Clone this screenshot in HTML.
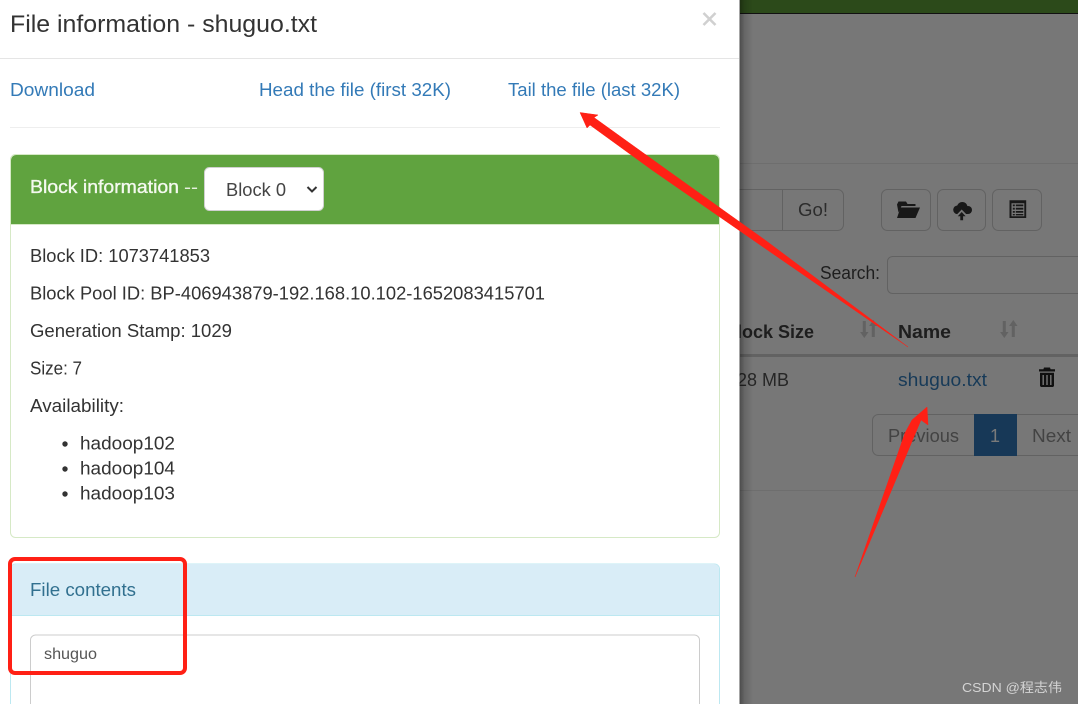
<!DOCTYPE html>
<html><head><meta charset="utf-8"><style>
html,body{margin:0;padding:0;background:#777}
svg{display:block;position:absolute;left:0;top:0}
text{font-family:"Liberation Sans","Noto Sans CJK SC",sans-serif}
</style></head><body>
<svg width="1078" height="704" viewBox="0 0 1078 704" xmlns="http://www.w3.org/2000/svg">
<defs><linearGradient id="sh" x1="0" x2="1" y1="0" y2="0"><stop offset="0" stop-color="#000" stop-opacity=".4"/><stop offset=".4" stop-color="#000" stop-opacity=".14"/><stop offset="1" stop-color="#000" stop-opacity="0"/></linearGradient></defs>
<rect width="1078" height="704" fill="#777"/>
<rect x="740" width="338" height="13" fill="#2c4a1a"/>
<rect x="740" y="13" width="338" height="1" fill="#111"/>
<rect x="740" y="163" width="338" height="1" fill="#6e6e6e"/>
<rect x="740" y="490" width="338" height="1" fill="#6e6e6e"/>
<!-- go group -->
<path d="M730 189.500H837.500a6 6 0 0 1 6 6V224.500a6 6 0 0 1-6 6H730" fill="none" stroke="#626262"/>
<path d="M782.500 190V230" stroke="#626262"/>
<text x="798" y="216" font-size="18.600" fill="#2c2c2c" textLength="30" lengthAdjust="spacingAndGlyphs">Go!</text>
<rect x="881.500" y="189.500" width="49" height="41" rx="6" fill="none" stroke="#626262"/>
<rect x="937.500" y="189.500" width="48" height="41" rx="6" fill="none" stroke="#626262"/>
<rect x="992.500" y="189.500" width="49" height="41" rx="6" fill="none" stroke="#626262"/>
<!-- folder -->
<path d="M897 204.500l1.500-3h7.500l1.500 2.500h8v2h-14l-3 6.500zM900.500 207.500h19.500l-4.500 10.500h-18.500z" fill="#181818"/>
<!-- cloud -->
<circle cx="957.500" cy="209.800" r="4.300" fill="#181818"/><circle cx="962.300" cy="207.300" r="5.300" fill="#181818"/><circle cx="968" cy="210" r="4" fill="#181818"/>
<rect x="957" y="209" width="11" height="5" fill="#181818"/>
<path d="M961.700 209.500l6.800 7h-4.300v5h-5v-5h-4.300z" fill="#777"/>
<path d="M961.700 212l3.900 4.300h-2.500v4h-2.800v-4h-2.500z" fill="#181818"/>
<!-- list -->
<path fill-rule="evenodd" d="M1009.500 200.300h16.700v17.700h-16.700zM1011.500 203.300v13h12.800v-13zM1012.800 204.500h2v1.800h-2zM1015.800 204.500h7.500v1.800h-7.500zM1012.800 207.800h2v1.800h-2zM1015.800 207.800h7.500v1.800h-7.500zM1012.800 211h2v1.800h-2zM1015.800 211h7.500v1.800h-7.500zM1012.800 214h2v1.400h-2zM1015.800 214h7.500v1.400h-7.500z" fill="#181818"/>
<text x="820" y="279" font-size="18.600" fill="#1e1e1e" textLength="60" lengthAdjust="spacingAndGlyphs">Search:</text>
<rect x="887.500" y="256.500" width="210" height="37" rx="5" fill="none" stroke="#626262"/>
<text x="724" y="338" font-size="18.600" font-weight="bold" fill="#1e1e1e" textLength="90" lengthAdjust="spacingAndGlyphs">Block Size</text>
<text x="898" y="338" font-size="18.600" font-weight="bold" fill="#1e1e1e" textLength="53" lengthAdjust="spacingAndGlyphs">Name</text>
<!-- sort icons -->
<g fill="#626262">
<path d="M862.800 321h3v11h2.700l-4.200 6-4.200-6h2.700zM874.800 337h-3v-11h-2.700l4.200-6 4.200 6h-2.700z"/>
<path d="M1002.800 321h3v11h2.700l-4.200 6-4.200-6h2.700zM1014.800 337h-3v-11h-2.700l4.200-6 4.200 6h-2.700z"/>
</g>
<rect x="740" y="354" width="338" height="3" fill="#626262"/>
<text x="727" y="386" font-size="18.600" fill="#262626" textLength="62" lengthAdjust="spacingAndGlyphs">128 MB</text>
<text x="898" y="386" font-size="18.600" fill="#173a58" textLength="89" lengthAdjust="spacingAndGlyphs">shuguo.txt</text>
<!-- trash -->
<path fill-rule="evenodd" d="M1044 367.500h6l.6 1.800h4.400v2.200h-16v-2.200h4.400zM1040 372.800h14v13.200l-1 1h-12l-1-1zM1042.500 375v10h1.400v-10zM1046.300 375v10h1.400v-10zM1050.100 375v10h1.400v-10z" fill="#101010"/>
<!-- pagination -->
<path d="M1078 414.500H878.500a6 6 0 0 0-6 6V449.500a6 6 0 0 0 6 6H1078" fill="none" stroke="#626262"/>
<rect x="974" y="414" width="43" height="42" fill="#173857"/>
<text x="888" y="442" font-size="18.600" fill="#434343" textLength="71" lengthAdjust="spacingAndGlyphs">Previous</text>
<text x="990" y="442" font-size="18.600" fill="#7a7a7a" textLength="10" lengthAdjust="spacingAndGlyphs">1</text>
<text x="1032" y="442" font-size="18.600" fill="#434343" textLength="39" lengthAdjust="spacingAndGlyphs">Next</text>
<text x="962" y="692" font-size="13" fill="#d4d4d4" textLength="100" lengthAdjust="spacingAndGlyphs">CSDN @程志伟</text>
<!-- shadow + modal -->
<rect x="739" width="14" height="704" fill="url(#sh)"/>
<rect width="739.500" height="704" fill="#fff"/>
<rect y="58" width="739" height="1" fill="#e5e5e5"/>
<text x="10" y="32" font-size="24" fill="#333" textLength="307" lengthAdjust="spacingAndGlyphs">File information - shuguo.txt</text>
<path d="M703.500 13l12 12M715.500 13l-12 12" stroke="#d0d0d0" stroke-width="2.600"/>
<g font-size="18.600" fill="#337ab7">
<text x="10" y="96" textLength="85" lengthAdjust="spacingAndGlyphs">Download</text>
<text x="259" y="96" textLength="192" lengthAdjust="spacingAndGlyphs">Head the file (first 32K)</text>
<text x="508" y="96" textLength="172" lengthAdjust="spacingAndGlyphs">Tail the file (last 32K)</text>
</g>
<rect x="10" y="127" width="710" height="1" fill="#eee"/>
<!-- green panel -->
<rect x="10.500" y="154.500" width="709" height="383" rx="5" fill="#fff" stroke="#d6e9c6"/>
<path d="M11 224V160a5 5 0 0 1 5-5H714a5 5 0 0 1 5 5V224z" fill="#60a33f"/>
<rect x="11" y="224" width="708" height="1" fill="#d6e9c6"/>
<text x="30" y="193" font-size="18.600" fill="#f4f9ef" stroke="#f4f9ef" stroke-width=".35" textLength="149" lengthAdjust="spacingAndGlyphs">Block information</text>
<text x="184" y="193" font-size="18.600" fill="#e6f0de" textLength="14" lengthAdjust="spacingAndGlyphs">--</text>
<rect x="204.500" y="167.500" width="119" height="43" rx="5" fill="#fff" stroke="#d0d0d0"/>
<text x="226" y="196" font-size="18.600" fill="#444" textLength="60" lengthAdjust="spacingAndGlyphs">Block 0</text>
<path d="M307.500 187l4.500 4.500 4.500-4.500" fill="none" stroke="#333" stroke-width="2"/>
<g font-size="18.600" fill="#333">
<text x="30" y="262" textLength="180" lengthAdjust="spacingAndGlyphs">Block ID: 1073741853</text>
<text x="30" y="299.500" textLength="515" lengthAdjust="spacingAndGlyphs">Block Pool ID: BP-406943879-192.168.10.102-1652083415701</text>
<text x="30" y="337" textLength="202" lengthAdjust="spacingAndGlyphs">Generation Stamp: 1029</text>
<text x="30" y="374.500" textLength="52" lengthAdjust="spacingAndGlyphs">Size: 7</text>
<text x="30" y="412" textLength="94" lengthAdjust="spacingAndGlyphs">Availability:</text>
<text x="80" y="449.500" textLength="95" lengthAdjust="spacingAndGlyphs">hadoop102</text>
<text x="80" y="474.500" textLength="95" lengthAdjust="spacingAndGlyphs">hadoop104</text>
<text x="80" y="499.500" textLength="95" lengthAdjust="spacingAndGlyphs">hadoop103</text>
<circle cx="65" cy="444" r="2.700"/><circle cx="65" cy="469" r="2.700"/><circle cx="65" cy="494" r="2.700"/>
</g>
<!-- info panel -->
<path d="M10.500 704V569a5 5 0 0 1 5-5H714.500a5 5 0 0 1 5 5V704" fill="#fff" stroke="#bce8f1"/>
<path d="M11 615V569a5 5 0 0 1 5-5H714a5 5 0 0 1 5 5V615z" fill="#d9edf7"/>
<rect x="11" y="615" width="708" height="1" fill="#bce8f1"/>
<text x="30" y="596" font-size="18.600" fill="#31708f" textLength="106" lengthAdjust="spacingAndGlyphs">File contents</text>
<path d="M30.500 704V640a5 5 0 0 1 5-5H694.500a5 5 0 0 1 5 5V704" fill="#fff" stroke="#ccc"/>
<text x="44" y="659" font-size="16" fill="#555" textLength="53" lengthAdjust="spacingAndGlyphs">shuguo</text>
<!-- annotations -->
<rect x="10" y="559" width="175" height="114" rx="5" fill="none" stroke="#ff2015" stroke-width="4"/>
<path d="M580 112.500L598 115L594 117.500L667 170L765 240L908 347L753 240L652 170L590 125L587 128z" fill="#ff2015" stroke="#ff2015" stroke-width=".5"/>
<path d="M927 407L928 425L921 420L855 577L905 433L912 420z" fill="#ff2015" stroke="#ff2015" stroke-width=".5"/>
</svg>
</body></html>
